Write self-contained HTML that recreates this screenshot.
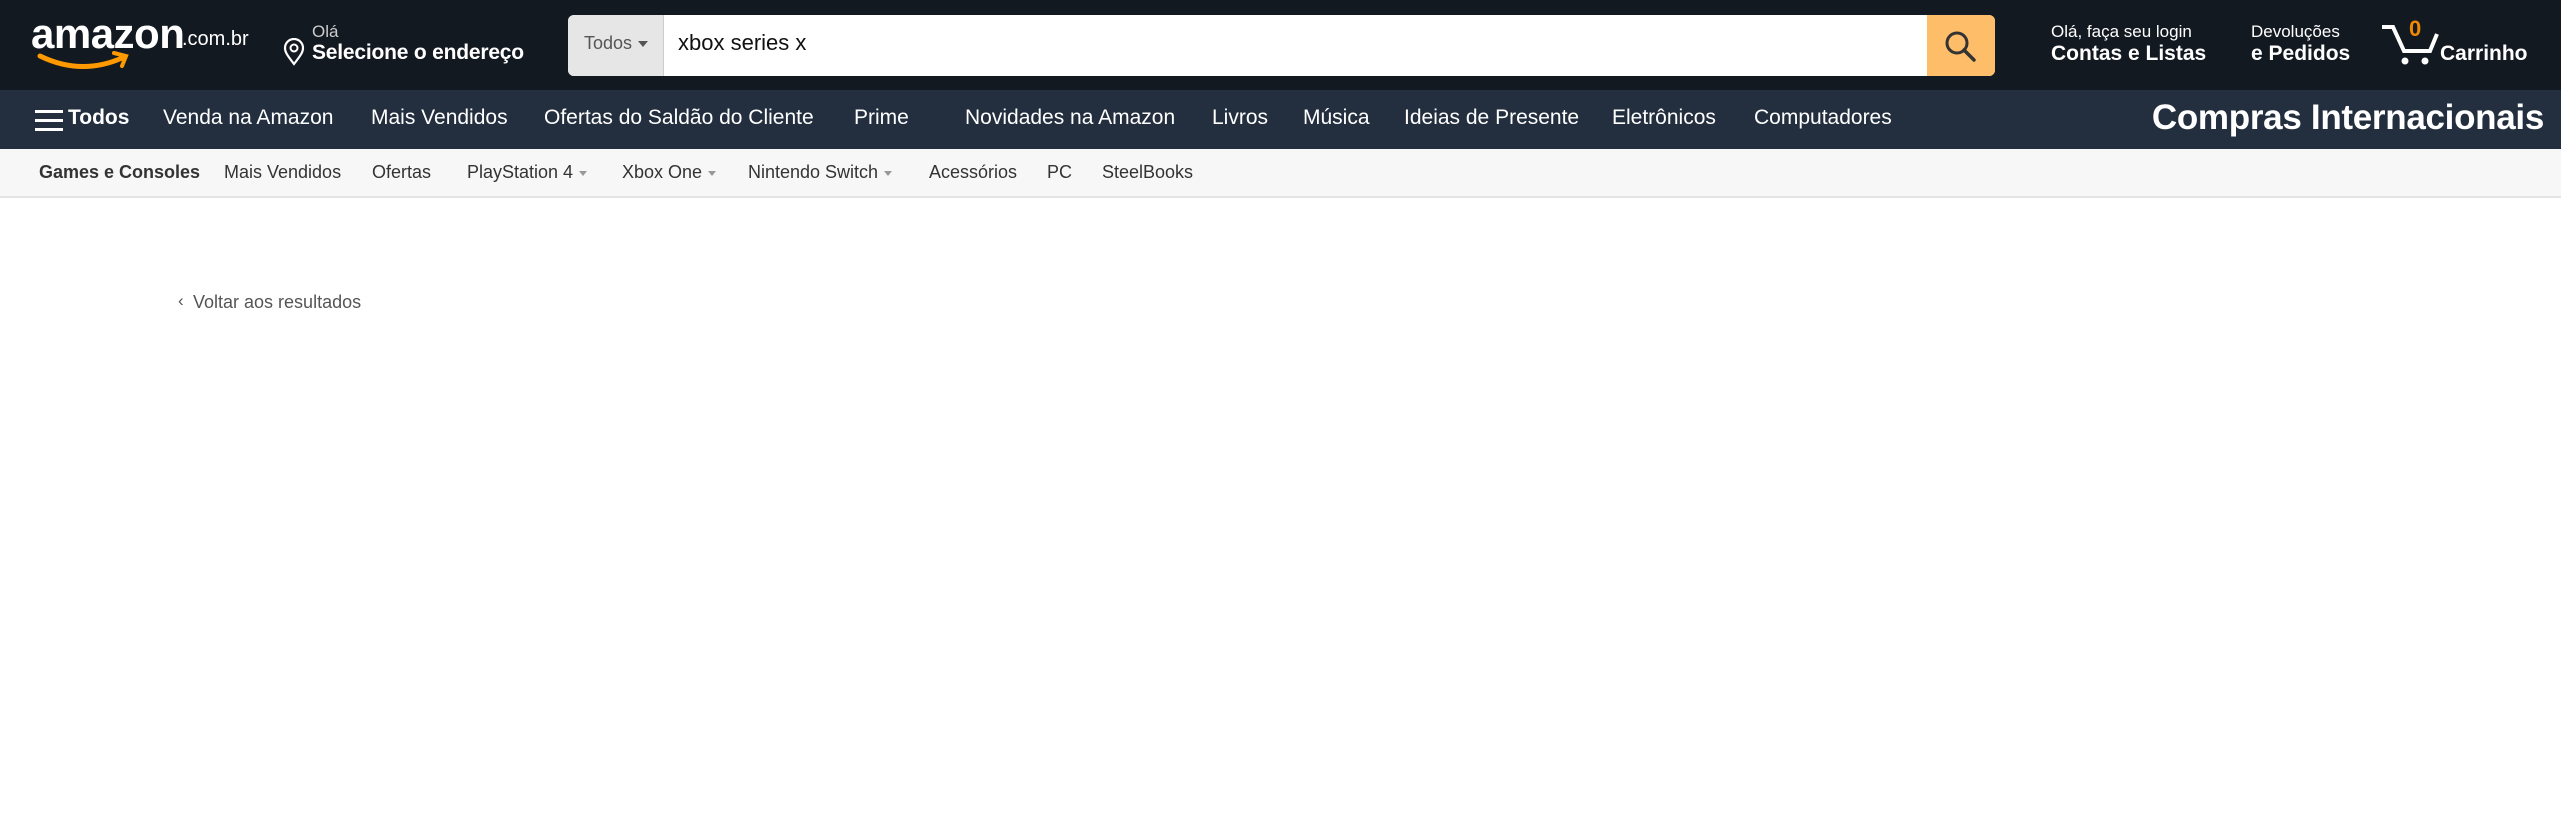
<!DOCTYPE html>
<html><head><meta charset="utf-8"><style>
*{margin:0;padding:0;box-sizing:border-box}
body{width:2561px;height:837px;background:#fff;font-family:"Liberation Sans",sans-serif;position:relative;overflow:hidden}
.a{position:absolute;white-space:nowrap}
#h{position:absolute;left:0;top:0;width:2561px;height:90px;background:#131921}
#n{position:absolute;left:0;top:90px;width:2561px;height:59px;background:#232f3e}
#s{position:absolute;left:0;top:149px;width:2561px;height:49px;background:#f7f7f7;border-bottom:2px solid #e3e3e3}
.w{color:#fff}
.nv{color:#fff;font-size:21px;top:106px}
.sn{color:#333;font-size:18px;top:162px}
.car{display:inline-block;width:0;height:0;border-left:4px solid transparent;border-right:4px solid transparent;border-top:5px solid #999;vertical-align:middle;margin-left:6px}
</style></head><body>
<div id="h"></div><div id="n"></div><div id="s"></div>

<!-- logo -->
<div class="a w" style="left:31px;top:10px;font-size:42px;font-weight:bold;letter-spacing:-0.5px">amazon</div>
<div class="a w" style="left:182px;top:28px;font-size:20px">.com.br</div>
<svg class="a" style="left:36px;top:50px" width="100" height="22" viewBox="0 0 100 22"><path d="M4 6 Q45 26 86 8" stroke="#f90" stroke-width="5" fill="none" stroke-linecap="round"/><path d="M78 3 L90 6 L86 16" stroke="#f90" stroke-width="4" fill="none" stroke-linecap="round"/></svg>

<!-- location -->
<svg class="a" style="left:283px;top:38px" width="22" height="28" viewBox="0 0 22 28"><path d="M11 26 C4 17 2 14 2 10 A9 9 0 0 1 20 10 C20 14 18 17 11 26Z" fill="none" stroke="#fff" stroke-width="2.2"/><circle cx="11" cy="10" r="3.5" fill="none" stroke="#fff" stroke-width="2"/></svg>
<div class="a" style="left:312px;top:22px;font-size:17px;color:#ccc">Olá</div>
<div class="a w" style="left:312px;top:41px;font-size:21px;font-weight:bold;letter-spacing:-0.2px">Selecione o endereço</div>

<!-- search -->
<div class="a" style="left:568px;top:15px;width:1427px;height:61px;background:#fff;border-radius:6px;overflow:hidden">
<div style="position:absolute;left:0;top:0;width:96px;height:61px;background:#e6e6e6;border-right:1px solid #cdcdcd"></div>
<div style="position:absolute;left:16px;top:18px;font-size:18px;color:#555">Todos<span class="car" style="border-top-color:#555;border-left-width:5px;border-right-width:5px;border-top-width:6px"></span></div>
<div style="position:absolute;left:110px;top:15px;font-size:22px;color:#111">xbox series x</div>
<div style="position:absolute;right:0;top:0;width:68px;height:61px;background:#febd69"></div>
<svg style="position:absolute;right:17px;top:15px" width="34" height="34" viewBox="0 0 34 34"><circle cx="13" cy="13" r="10" fill="none" stroke="#333" stroke-width="3"/><path d="M20 20 L30 30" stroke="#333" stroke-width="3.5" stroke-linecap="round"/></svg>
</div>

<!-- account -->
<div class="a w" style="left:2051px;top:22px;font-size:17px">Olá, faça seu login</div>
<div class="a w" style="left:2051px;top:42px;font-size:21px;font-weight:bold">Contas e Listas</div>
<div class="a w" style="left:2251px;top:22px;font-size:17px">Devoluções</div>
<div class="a w" style="left:2251px;top:42px;font-size:21px;font-weight:bold">e Pedidos</div>
<svg class="a" style="left:2378px;top:22px" width="64" height="46" viewBox="0 0 64 46"><path d="M4 5 H15 L26 29 H52 L59 12" fill="none" stroke="#fff" stroke-width="4"/><circle cx="27" cy="39" r="3.5" fill="#fff"/><circle cx="47" cy="39" r="3.5" fill="#fff"/></svg>
<div class="a" style="left:2409px;top:16px;font-size:22px;font-weight:bold;color:#f08804">0</div>
<div class="a w" style="left:2440px;top:42px;font-size:21px;font-weight:bold">Carrinho</div>

<!-- nav -->
<svg class="a" style="left:35px;top:108px" width="28" height="24" viewBox="0 0 28 24"><rect y="2" width="28" height="3" fill="#fff"/><rect y="11" width="28" height="3" fill="#fff"/><rect y="20" width="28" height="3" fill="#fff"/></svg>
<div class="a nv" style="left:68px;font-weight:bold">Todos</div>
<div class="a nv" style="left:163px">Venda na Amazon</div>
<div class="a nv" style="left:371px">Mais Vendidos</div>
<div class="a nv" style="left:544px">Ofertas do Saldão do Cliente</div>
<div class="a nv" style="left:854px">Prime</div>
<div class="a nv" style="left:965px">Novidades na Amazon</div>
<div class="a nv" style="left:1212px">Livros</div>
<div class="a nv" style="left:1303px">Música</div>
<div class="a nv" style="left:1404px">Ideias de Presente</div>
<div class="a nv" style="left:1612px">Eletrônicos</div>
<div class="a nv" style="left:1754px">Computadores</div>
<div class="a w" style="right:17px;top:98px;font-size:35px;font-weight:bold;letter-spacing:-0.3px">Compras Internacionais</div>

<!-- subnav -->
<div class="a sn" style="left:39px;font-weight:bold">Games e Consoles</div>
<div class="a sn" style="left:224px">Mais Vendidos</div>
<div class="a sn" style="left:372px">Ofertas</div>
<div class="a sn" style="left:467px">PlayStation 4<span class="car"></span></div>
<div class="a sn" style="left:622px">Xbox One<span class="car"></span></div>
<div class="a sn" style="left:748px">Nintendo Switch<span class="car"></span></div>
<div class="a sn" style="left:929px">Acessórios</div>
<div class="a sn" style="left:1047px">PC</div>
<div class="a sn" style="left:1102px">SteelBooks</div>

<div class="a" style="left:178px;top:291px;font-size:17px;color:#555">‹</div>
<div class="a" style="left:193px;top:292px;font-size:18px;color:#555">Voltar aos resultados</div>
</body></html>
